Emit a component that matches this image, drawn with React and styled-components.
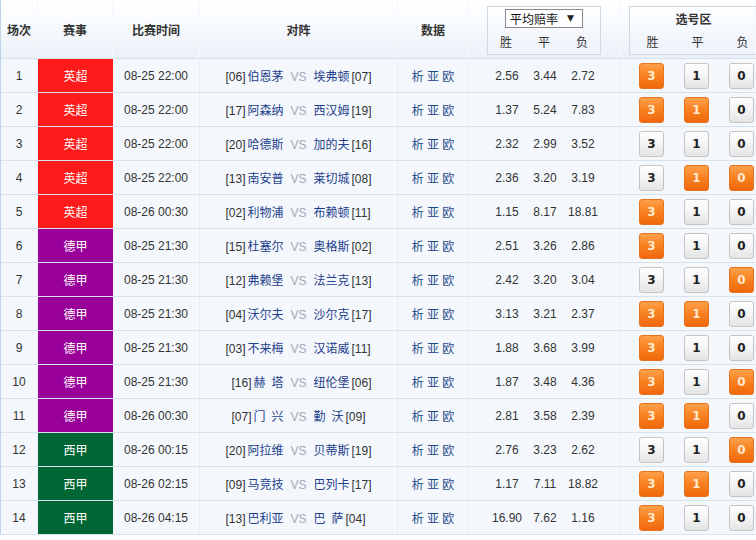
import React from "react";
import styled, { createGlobalStyle } from "styled-components";

const GlobalStyle = createGlobalStyle`
  body {
    margin: 0;
    background: #ffffff;
    font-family: "Liberation Sans", "Noto Sans CJK SC", sans-serif;
    font-size: 12px;
    color: #333333;
  }
`;

const COLS = "37px 75px 87px 198px 71px 151px 136px";

const LEAGUE_COLOR = {
  英超: "#fd1a1a",
  德甲: "#990099",
  西甲: "#006633",
};

const matches = [
  { no: 1, league: "英超", time: "08-25 22:00", hr: "06", home: "伯恩茅", away: "埃弗顿", ar: "07", odds: ["2.56", "3.44", "2.72"], pick: [1, 0, 0] },
  { no: 2, league: "英超", time: "08-25 22:00", hr: "17", home: "阿森纳", away: "西汉姆", ar: "19", odds: ["1.37", "5.24", "7.83"], pick: [1, 1, 0] },
  { no: 3, league: "英超", time: "08-25 22:00", hr: "20", home: "哈德斯", away: "加的夫", ar: "16", odds: ["2.32", "2.99", "3.52"], pick: [0, 0, 0] },
  { no: 4, league: "英超", time: "08-25 22:00", hr: "13", home: "南安普", away: "莱切城", ar: "08", odds: ["2.36", "3.20", "3.19"], pick: [0, 1, 1] },
  { no: 5, league: "英超", time: "08-26 00:30", hr: "02", home: "利物浦", away: "布赖顿", ar: "11", odds: ["1.15", "8.17", "18.81"], pick: [1, 0, 0] },
  { no: 6, league: "德甲", time: "08-25 21:30", hr: "15", home: "杜塞尔", away: "奥格斯", ar: "02", odds: ["2.51", "3.26", "2.86"], pick: [1, 0, 0] },
  { no: 7, league: "德甲", time: "08-25 21:30", hr: "12", home: "弗赖堡", away: "法兰克", ar: "13", odds: ["2.42", "3.20", "3.04"], pick: [0, 0, 1] },
  { no: 8, league: "德甲", time: "08-25 21:30", hr: "04", home: "沃尔夫", away: "沙尔克", ar: "17", odds: ["3.13", "3.21", "2.37"], pick: [1, 1, 0] },
  { no: 9, league: "德甲", time: "08-25 21:30", hr: "03", home: "不来梅", away: "汉诺威", ar: "11", odds: ["1.88", "3.68", "3.99"], pick: [1, 0, 0] },
  { no: 10, league: "德甲", time: "08-25 21:30", hr: "16", home: "赫\u2002塔", away: "纽伦堡", ar: "06", odds: ["1.87", "3.48", "4.36"], pick: [1, 0, 1] },
  { no: 11, league: "德甲", time: "08-26 00:30", hr: "07", home: "门\u2002兴", away: "勤\u2002沃", ar: "09", odds: ["2.81", "3.58", "2.39"], pick: [1, 1, 0] },
  { no: 12, league: "西甲", time: "08-26 00:15", hr: "20", home: "阿拉维", away: "贝蒂斯", ar: "19", odds: ["2.76", "3.23", "2.62"], pick: [0, 0, 1] },
  { no: 13, league: "西甲", time: "08-26 02:15", hr: "09", home: "马竞技", away: "巴列卡", ar: "17", odds: ["1.17", "7.11", "18.82"], pick: [1, 1, 0] },
  { no: 14, league: "西甲", time: "08-26 04:15", hr: "13", home: "巴利亚", away: "巴\u2002萨", ar: "04", odds: ["16.90", "7.62", "1.16"], pick: [1, 0, 0] },
];

const App = () => {
  return (
    <>
      <GlobalStyle />
      <Table>
        <HeadRow>
          <HeadCell>场次</HeadCell>
          <HeadCell>赛事</HeadCell>
          <HeadCell>比赛时间</HeadCell>
          <HeadCell>对阵</HeadCell>
          <HeadCell>数据</HeadCell>
          <HeadCell>
            <OddsBox>
              <FakeSelect>
                平均赔率<Arrow>▼</Arrow>
              </FakeSelect>
              <TriRow $w={38}>
                <span>胜</span>
                <span>平</span>
                <span>负</span>
              </TriRow>
            </OddsBox>
          </HeadCell>
          <HeadCell $align="start">
            <PickBox>
              <PickTitle>选号区</PickTitle>
              <TriRow $w={45}>
                <span>胜</span>
                <span>平</span>
                <span>负</span>
              </TriRow>
            </PickBox>
          </HeadCell>
        </HeadRow>
        {matches.map(m => (
          <Row key={m.no}>
            <Cell>{m.no}</Cell>
            <LeagueCell $bg={LEAGUE_COLOR[m.league]}>{m.league}</LeagueCell>
            <Cell>{m.time}</Cell>
            <Cell>
              <Versus>
                <Side $end>
                  [{m.hr}]<Team>{m.home}</Team>
                </Side>
                <Vs>VS</Vs>
                <Side>
                  <Team>{m.away}</Team>[{m.ar}]
                </Side>
              </Versus>
            </Cell>
            <Cell>
              <DataLinks>析 亚 欧</DataLinks>
            </Cell>
            <Cell $align="start">
              <OddsRow>
                {m.odds.map((o, i) => (
                  <span key={i}>{o}</span>
                ))}
              </OddsRow>
            </Cell>
            <Cell $align="start" $last>
              <PickRow>
                {["3", "1", "0"].map((v, i) => (
                  <PickSlot key={v}>
                    <PickButton $on={m.pick[i] === 1}>{v}</PickButton>
                  </PickSlot>
                ))}
              </PickRow>
            </Cell>
          </Row>
        ))}
      </Table>
    </>
  );
};

const Table = styled.div`
  width: 756px;
  overflow: hidden;
  border-left: 1px solid #bfd3ea;
  box-sizing: border-box;
`;
const HeadRow = styled.div`
  display: grid;
  grid-template-columns: ${COLS};
  height: 59px;
  box-sizing: border-box;
  border-bottom: 1px solid #d6e1ec;
  background: linear-gradient(180deg, #ffffff 0%, #f7fafd 45%, #ebf1f9 100%);
`;
const HeadCell = styled.div`
  display: flex;
  align-items: center;
  justify-content: ${props => (props.$align === "start" ? "flex-start" : "center")};
  font-weight: bold;
  color: #333333;
  border-right: 1px solid #f4f8fc;
  box-sizing: border-box;
`;
const OddsBox = styled.div`
  width: 114px;
  height: 49px;
  margin-top: 2px;
  border: 1px solid #cfd9e4;
  box-sizing: border-box;
  display: flex;
  flex-direction: column;
  align-items: center;
  font-weight: normal;
`;
const FakeSelect = styled.div`
  margin-top: 2px;
  width: 78px;
  height: 19px;
  box-sizing: border-box;
  border: 1px solid #8a8a8a;
  background: #ffffff;
  display: flex;
  align-items: center;
  padding-left: 4px;
  color: #111111;
`;
const Arrow = styled.span`
  font-size: 9px;
  margin-left: 9px;
  color: #222222;
  font-family: "DejaVu Sans", sans-serif;
`;
const TriRow = styled.div`
  display: flex;
  margin-top: auto;
  margin-bottom: 4px;
  font-weight: normal;
  color: #333333;
  span {
    width: ${props => props.$w}px;
    text-align: center;
  }
`;
const PickBox = styled.div`
  margin-left: 9px;
  margin-top: 2px;
  width: 140px;
  height: 49px;
  border: 1px solid #cfd9e4;
  border-right: none;
  box-sizing: border-box;
  display: flex;
  flex-direction: column;
  align-items: flex-start;
`;
const PickTitle = styled.div`
  width: 127px;
  text-align: center;
  margin-top: 3px;
  font-weight: bold;
`;
const Row = styled.div`
  display: grid;
  grid-template-columns: ${COLS};
  height: 34px;
  box-sizing: border-box;
  border-bottom: 1px solid #d9e3ee;
  background: #f4f8fc;
`;
const Cell = styled.div`
  display: flex;
  align-items: center;
  justify-content: ${props => (props.$align === "start" ? "flex-start" : "center")};
  border-right: ${props => (props.$last ? "none" : "1px solid #e7eef6")};
  box-sizing: border-box;
  color: #333333;
`;
const LeagueCell = styled.div`
  display: flex;
  align-items: center;
  justify-content: center;
  background: ${props => props.$bg};
  color: #ffffff;
`;
const Versus = styled.div`
  display: grid;
  grid-template-columns: 1fr auto 1fr;
  column-gap: 5px;
  width: 100%;
  align-items: baseline;
`;
const Side = styled.div`
  text-align: ${props => (props.$end ? "right" : "left")};
  white-space: nowrap;
  color: #333333;
`;
const Team = styled.span`
  color: #1f3f8c;
  margin: 0 2px;
`;
const Vs = styled.span`
  color: #a3abb6;
`;
const DataLinks = styled.span`
  color: #1f4a8c;
`;
const OddsRow = styled.div`
  display: flex;
  margin-left: 19px;
  span {
    width: 38px;
    text-align: center;
  }
`;
const PickRow = styled.div`
  display: flex;
  margin-left: 9px;
`;
const PickSlot = styled.div`
  width: 45px;
  display: flex;
  justify-content: center;
`;
const PickButton = styled.div`
  width: 25px;
  height: 26px;
  box-sizing: border-box;
  border-radius: 3px;
  display: flex;
  align-items: center;
  justify-content: center;
  font-family: "DejaVu Sans", sans-serif;
  font-weight: bold;
  font-size: 12px;
  border: 1px solid ${props => (props.$on ? "#e8731c" : "#c4c4c4")};
  background: ${props =>
    props.$on
      ? "linear-gradient(180deg, #ffa04a 0%, #f7801f 50%, #f0680c 100%)"
      : "linear-gradient(180deg, #ffffff 0%, #f4f4f4 50%, #e4e4e4 100%)"};
  color: ${props => (props.$on ? "#ffe9cf" : "#222222")};
`;

export default App;
